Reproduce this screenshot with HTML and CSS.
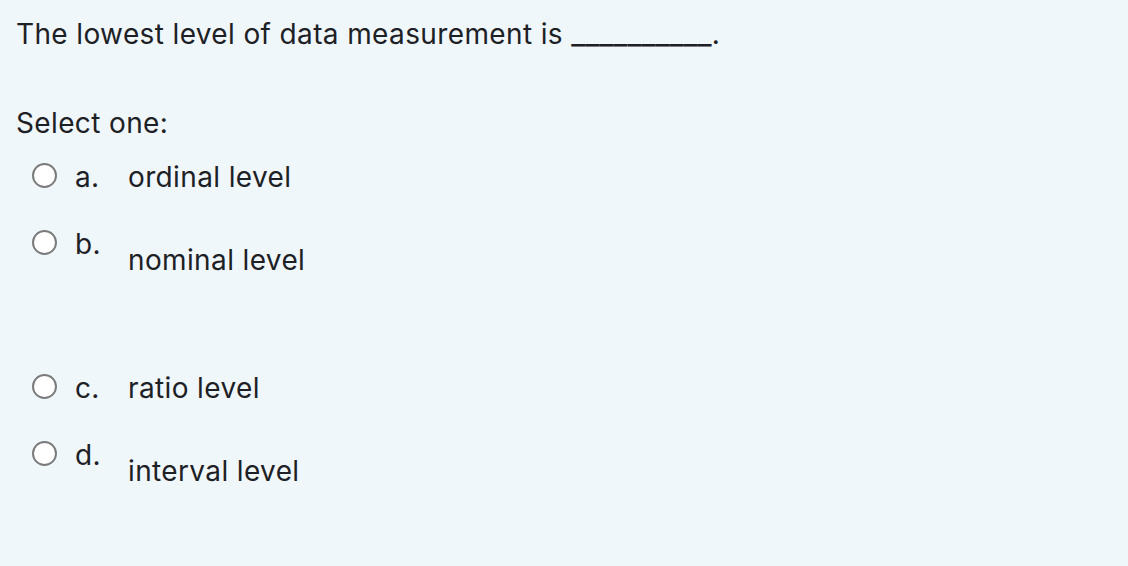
FILE: index.html
```html
<!DOCTYPE html>
<html>
<head>
<meta charset="utf-8">
<link rel="stylesheet" href="styles.css">
</head>
<body>
<div class="formulation">
  <div class="qtext">The lowest level of data measurement is <span class="blank">__________</span>.</div>
  <div class="prompt">Select one:</div>
  <div class="answers">
    <div class="option opt-a">
      <span class="radio"></span>
      <span class="letter">a.</span>
      <div class="answer">ordinal level</div>
    </div>
    <div class="option opt-b">
      <span class="radio"></span>
      <span class="letter">b.</span>
      <div class="answer shifted">nominal level</div>
    </div>
    <div class="option opt-c">
      <span class="radio"></span>
      <span class="letter">c.</span>
      <div class="answer">ratio level</div>
    </div>
    <div class="option opt-d">
      <span class="radio"></span>
      <span class="letter">d.</span>
      <div class="answer shifted">interval level</div>
    </div>
  </div>
</div>
</body>
</html>
```
FILE: styles.css
```css
html, body {
  margin: 0;
  padding: 0;
  background: #f0f7fb;
}
body {
  width: 1128px;
  height: 566px;
  overflow: hidden;
}
.formulation {
  font-family: Inter, "Liberation Sans", sans-serif;
  font-size: 28px;
  line-height: 42px;
  letter-spacing: 0.37px;
  color: #1d2125;
  padding: 13px 16px 0 16px;
}
.qtext {
  height: 42px;
}
.blank {
  font-size: 30.8px;
  line-height: 0;
  letter-spacing: 0;
}
.prompt {
  margin-top: 47px;
}
.answers {
  margin-top: 12px;
}
.option {
  display: flex;
  align-items: flex-start;
}
.radio {
  width: 21px;
  height: 21px;
  border: 2px solid #7b7b7b;
  border-radius: 50%;
  background: #ffffff;
  margin-left: 16px;
  margin-top: 7px;
  flex: none;
}
.letter {
  margin-left: 18px;
  width: 53px;
  flex: none;
}
.answer.shifted {
  padding-top: 16px;
}
.opt-a {
  margin-bottom: 25px;
}
.opt-b {
  margin-bottom: 86px;
}
.opt-c {
  margin-bottom: 25px;
}
```
